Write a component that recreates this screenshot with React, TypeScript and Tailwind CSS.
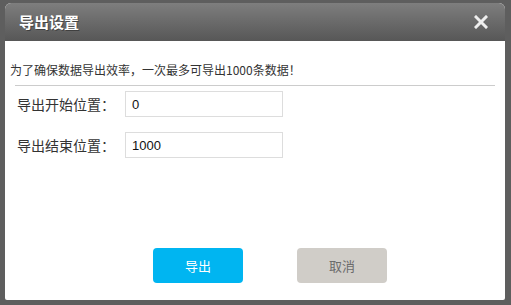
const font = "font-['Microsoft_YaHei','Noto_Sans_CJK_SC',sans-serif]";

const Row = ({ label, value }: { label: string; value: string }) => {
  return (
    <div className="flex items-center">
      <div className="w-[120px] shrink-0 whitespace-nowrap pl-[12px] text-[14px] text-[#333]">{label}</div>
      <input
        defaultValue={value}
        className="w-[158px] h-[26px] shrink-0 border border-[#ddd] px-[6px] text-[13px] text-[#111] outline-none font-['Liberation_Sans',sans-serif]"
      />
    </div>
  );
};

const App = () => {
  return (
    <div className={`w-[511px] h-[305px] bg-[#5e5e5e] pt-[3px] pl-[5px] overflow-hidden ${font}`}>
      <div className="w-[500px] h-[297px] bg-white rounded-t-[6px] rounded-b-[2px] flex flex-col overflow-hidden">
        <div className="h-[38px] shrink-0 bg-gradient-to-b from-[#7e7e7e] to-[#575757] flex items-center justify-between pl-[14px] pr-[17px]">
          <h1 className="text-[15px] font-bold text-white [text-shadow:1px_1px_0_rgba(0,0,0,0.35)]">导出设置</h1>
          <svg width="14" height="14" viewBox="0 0 14 14" className="cursor-pointer">
            <path d="M2 2 L12 12 M12 2 L2 12" stroke="#eeeeee" strokeWidth="3" strokeLinecap="square" />
          </svg>
        </div>
        <div className="flex flex-col">
          <p className="mt-[21px] pl-[5px] whitespace-nowrap text-[12px] leading-[16px] text-[#333]">
            为了确保数据导出效率，一次最多可导出1000条数据！
          </p>
          <div className="mt-[7px] mx-[10px] h-px shrink-0 bg-[#cccccc]" />
          <div className="mt-[5px] flex flex-col gap-[15px]">
            <Row label="导出开始位置：" value="0" />
            <Row label="导出结束位置：" value="1000" />
          </div>
          <div className="mt-[90px] pl-[148px] flex gap-[54px]">
            <button className="w-[90px] h-[35px] shrink-0 rounded-[4px] bg-[#00b5f1] text-white text-[13px]">导出</button>
            <button className="w-[90px] h-[35px] shrink-0 rounded-[4px] bg-[#d0cdc8] text-[#6b6b6b] text-[13px]">取消</button>
          </div>
        </div>
      </div>
    </div>
  );
};

export default App;
